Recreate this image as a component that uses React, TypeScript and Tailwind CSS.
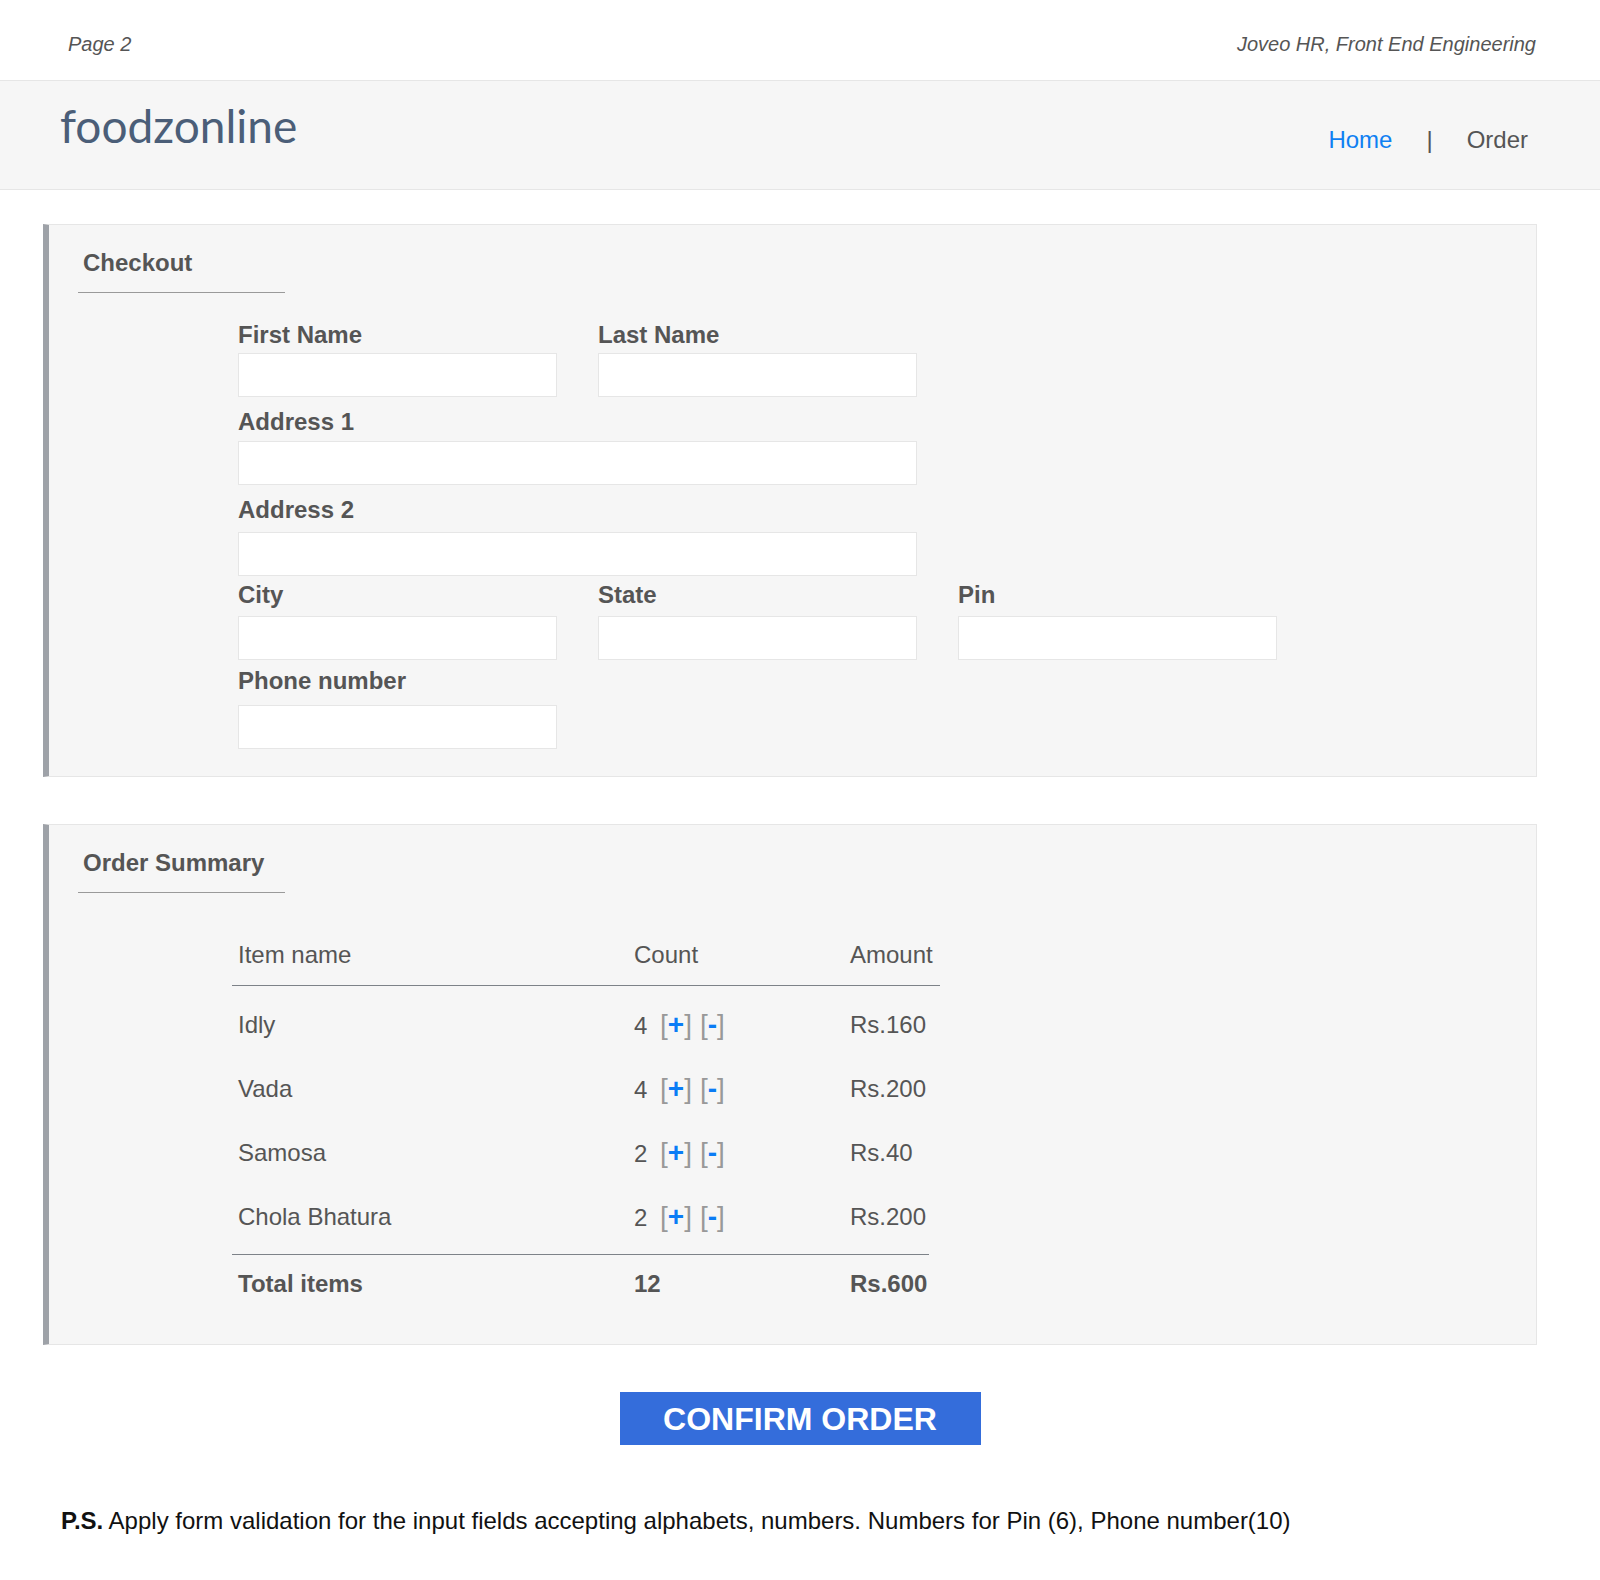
import React from "react";

// gap under the label, gap after the row
const fields = [
  { gap: 4, after: 11, cells: [{ label: "First Name" }, { label: "Last Name" }] },
  { gap: 5, after: 11, cells: [{ label: "Address 1", wide: true }] },
  { gap: 8, after: 5, cells: [{ label: "Address 2", wide: true }] },
  { gap: 7, after: 7, cells: [{ label: "City" }, { label: "State" }, { label: "Pin" }] },
  { gap: 10, after: 0, cells: [{ label: "Phone number" }] },
];

const items = [
  { name: "Idly", count: 4, amount: "Rs.160" },
  { name: "Vada", count: 4, amount: "Rs.200" },
  { name: "Samosa", count: 2, amount: "Rs.40" },
  { name: "Chola Bhatura", count: 2, amount: "Rs.200" },
];

function Panel({ title, children }: { title: string; children: React.ReactNode }) {
  return (
    <section className="w-[1494px] border border-[#e6e6e6] border-l-[6px] border-l-[#9ea2a8] bg-[#f6f6f6] pl-[29px]">
      <div className="w-[207px] border-b border-[#9a9a9a] pt-[24px] pb-[15px] pl-[5px] text-[24px] font-bold leading-[28px]">
        {title}
      </div>
      {children}
    </section>
  );
}

function Stepper({ count }: { count: number }) {
  return (
    <div className="flex items-baseline">
      <span className="w-[26px]">{count}</span>
      <span className="text-[28px] leading-[28px] text-[#999]">
        [<span className="font-bold text-[#0a7cf5]">+</span>]
      </span>
      <span className="ml-[8px] text-[28px] leading-[28px] text-[#999]">
        [<span className="font-bold text-[#0a7cf5]">-</span>]
      </span>
    </div>
  );
}

export default function App() {
  return (
    <div className="min-h-screen bg-white pb-[40px] font-['Liberation_Sans',Arial,sans-serif] text-[#555]">
      <div className="flex h-[80px] items-center justify-between pt-[8px] pl-[68px] pr-[64px] text-[20px] italic text-[#555]">
        <span>Page 2</span>
        <span>Joveo HR, Front End Engineering</span>
      </div>

      <header className="flex h-[110px] items-start justify-between border-y border-[#e6e6e6] bg-[#f6f6f6] pl-[60px] pr-[72px]">
        <div className="pt-[18px] font-['Lato','Noto_Sans',sans-serif] text-[46px] leading-[54px] text-[#4b5e78]">
          foodzonline
        </div>
        <nav className="flex items-center pt-[45px] text-[24px] leading-[28px]">
          <a className="text-[#0f80f2]">Home</a>
          <span className="mx-[34px] text-[#555]">|</span>
          <a className="text-[#555]">Order</a>
        </nav>
      </header>

      <main className="ml-[43px] mt-[34px] flex flex-col gap-[47px]">
        <Panel title="Checkout">
          <div className="ml-[160px] pt-[28px] pb-[27px]">
            {fields.map((row, i) => (
              <div key={i} className="flex gap-[41px]" style={{ marginBottom: row.after }}>
                {row.cells.map((f) => (
                  <label key={f.label} className="flex flex-col">
                    <span className="text-[24px] font-bold leading-[28px]" style={{ marginBottom: row.gap }}>
                      {f.label}
                    </span>
                    <input
                      className={`h-[44px] border border-[#e6e6e6] bg-white outline-none ${
                        "wide" in f && f.wide ? "w-[679px]" : "w-[319px]"
                      }`}
                    />
                  </label>
                ))}
              </div>
            ))}
          </div>
        </Panel>

        <Panel title="Order Summary">
          <div className="ml-[154px] w-[708px] pt-[48px] pb-[46px] text-[24px] leading-[28px]">
            <div className="grid grid-cols-[396px_216px_1fr] border-b border-[#7d8288] pb-[16px] pl-[6px]">
              <span>Item name</span>
              <span>Count</span>
              <span>Amount</span>
            </div>
            <div className="mr-[11px] border-b border-[#7d8288] pt-[7px] pb-[5px]">
              {items.map((it) => (
                <div key={it.name} className="grid h-[64px] grid-cols-[396px_216px_1fr] items-center pl-[6px]">
                  <span>{it.name}</span>
                  <Stepper count={it.count} />
                  <span>{it.amount}</span>
                </div>
              ))}
            </div>
            <div className="grid grid-cols-[396px_216px_1fr] pt-[15px] pl-[6px] font-bold">
              <span>Total items</span>
              <span>12</span>
              <span>Rs.600</span>
            </div>
          </div>
        </Panel>
      </main>

      <div className="mt-[47px] flex justify-center">
        <button className="h-[53px] w-[361px] bg-[#346ddb] text-[32px] font-bold leading-none text-white">
          CONFIRM ORDER
        </button>
      </div>

      <p className="mt-[62px] pl-[61px] text-[24px] leading-[28px] text-[#111]">
        <span className="font-bold">P.S.</span> Apply form validation for the input fields accepting alphabets, numbers.
        Numbers for Pin (6), Phone number(10)
      </p>
    </div>
  );
}
